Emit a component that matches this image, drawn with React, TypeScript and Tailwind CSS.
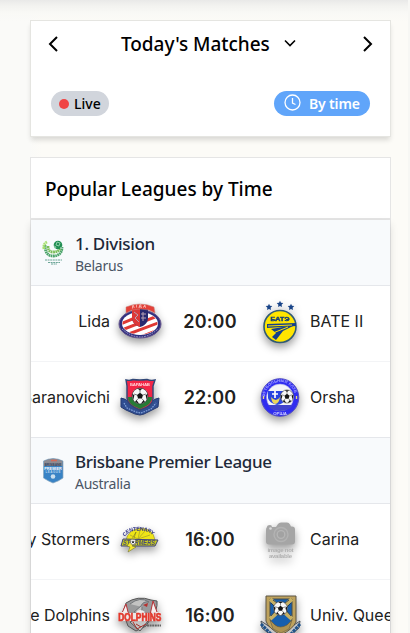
import React from "react";

const ui = "font-['Noto_Sans','Open_Sans',sans-serif]";
const inter = "font-['Inter',sans-serif]";

function Ball({ x, y, r }: { x: number; y: number; r: number }) {
  return (
    <g transform={`translate(${x} ${y}) scale(${r / 8})`}>
      <circle r="8" fill="#f8f8f8" stroke="#222" strokeWidth=".6" />
      <path d="M0-3.2 3-1 1.9 2.6H-1.9L-3-1Z" fill="#161616" />
      <path d="M-2.6-7.5 0-5.6 2.6-7.5ZM7.8-2.3 5.6-.8 6.8 4ZM-7.8-2.3-5.6-.8-6.8 4ZM-5 6-3.6 4-.8 7.8ZM5 6 3.6 4 .8 7.8Z" fill="#161616" />
      <path d="M0-3.2V-6M3-1 6-2M1.9 2.6 4 5M-1.9 2.6-4 5M-3-1-6-2" stroke="#444" strokeWidth=".7" />
    </g>
  );
}

function Lida() {
  return (
    <>
      <clipPath id="lidaOval"><ellipse cx="22" cy="23.5" rx="17.5" ry="11" /></clipPath>
      <ellipse cx="22" cy="24" rx="21" ry="14" fill="#30307f" stroke="#66558d" />
      <ellipse cx="22" cy="23.5" rx="18" ry="11.4" fill="#fff" />
      <g clipPath="url(#lidaOval)" stroke="#df3934" strokeWidth="3">
        <path d="M0 25 36 10M1 31 45 14M8 35 48 20M20 38 48 27" />
      </g>
      <path d="M14 8h16v10c0 5-4 8-8 9-5-2-8-5-8-9Z" fill="#28296f" />
      <path d="M14 8h8v19c-5-2-8-5-8-9Z" fill="#dd3838" />
      <path d="m16 12 4 3-3 3 4 4M25 12v9m-2-7h5m-5 4h5" stroke="#b7a2b4" strokeWidth="1" fill="none" />
      <path d="M8 7Q22 1 36 7l1 6-6-3Q22 8 14 10l-6 3Z" fill="#e34139" stroke="#c9857f" strokeWidth=".5" />
      <path id="lidaTop" d="M14 8.6Q22 6 31 8.6" fill="none" />
      <text fontSize="4" fontWeight="700" fill="#ffe5df"><textPath href="#lidaTop" textLength="14">ЛІДА</textPath></text>
      <path d="M4 29Q22 45 40 29" fill="none" stroke="#a9a0cb" strokeWidth="1" strokeDasharray="1.7 1" />
    </>
  );
}

function Baranovichi() {
  return (
    <>
      <path d="M3 22q5 0 9 6l10 4 10-4q4-6 9-6l-1 9-6 3-8 4-4 1-5-1-9-4-5-3Z" fill="#304e91" stroke="#263b72" />
      <path d="M8 4q4 1 7-.5 7 1 14 0Q33 5 37 4l-2 6v13q0 7-13 11Q9 29 9 22V10Z" fill="#f22647" stroke="#314777" strokeWidth="1.4" />
      <path d="M10 21h24q1 7-12 12-13-5-12-12Z" fill="#267c36" />
      <Ball x={22} y={20} r={8} />
      <text x="22" y="10" textAnchor="middle" fontSize="4.4" fontWeight="800" fill="#ffd1d6" textLength="20">БАРАНАВ</text>
      <path d="m6 27 3 5 9 4 5 1 10-4 5-6" fill="none" stroke="#86a4d8" strokeWidth="1.2" strokeDasharray="1.6 1" />
    </>
  );
}

function Bate() {
  return (
    <>
      <g fill="#194488">
        <path id="bateStar" d="m22 .8 1 2 2.3.3-1.7 1.6.4 2.3-2-1.1-2 1.1.4-2.3L18.7 3l2.3-.2Z" />
        <use href="#bateStar" x="-11" y="3" /><use href="#bateStar" x="11" y="3" />
      </g>
      <circle cx="22" cy="26.5" r="16" fill="#ffe500" stroke="#315b74" strokeWidth="1.6" />
      <text x="22" y="20.5" textAnchor="middle" fontSize="5.2" fontWeight="900" textLength="19" lengthAdjust="spacingAndGlyphs" fill="#164077" stroke="#164077" strokeWidth=".4">БАТЭ</text>
      <path d="M9 24 38 23v3L9 28Z" fill="#16408c" />
      <path d="m13 29 24-4-12 6-7 9-4-3 4-4Z" fill="#16408c" />
      <path d="m10 26 24-1M15 33l15-6" stroke="#ffe500" strokeWidth="1" />
    </>
  );
}

function Orsha() {
  return (
    <>
      <circle cx="22" cy="21.5" r="18.8" fill="#302df0" stroke="#5551c2" />
      <circle cx="22" cy="21.5" r="13.4" fill="#f5f5f8" stroke="#aaa8ed" strokeWidth=".6" />
      <path d="M10 15h18v7q-2 6-9 7-8-2-9-7Z" fill="#2944e0" />
      <path d="M17 15v7m-3-4h6" stroke="#fff" strokeWidth="1.7" />
      <path d="M13 21q5 6 9 0-1 7-5 7-3 0-4-7" fill="#ecd65b" />
      <Ball x={29} y={20.5} r={6.6} />
      <path d="M10 29h25q-4 6-13 6t-12-6Z" fill="#4142cd" />
      <path id="orshaTop" d="M7 21a15 15 0 0 1 30 0" fill="none" />
      <text fontSize="4" fontWeight="700" fill="#aaa8ff"><textPath href="#orshaTop" textLength="43">ФУТБОЛЬНЫЙ КЛУБ</textPath></text>
      <text x="22" y="39" fontSize="4.3" fontWeight="700" textAnchor="middle" fill="#d0cfff">ОРША</text>
      <path d="M5.5 20v3M38.5 20v3" stroke="#eadb7c" strokeWidth="1.3" />
    </>
  );
}

function Stormers() {
  return (
    <>
      <path d="M8 22q2-10 14-12 13 0 15 12Z" fill="#eee517" stroke="#8d873e" strokeWidth=".6" />
      <path d="m22 12-2 9 12-4m-12 4-8-4m8 4 7-8" stroke="#a49f29" strokeWidth=".7" fill="none" />
      <path id="stormArc" d="M7 19Q10 13 18 13 30 11 36 19" fill="none" />
      <text fontSize="5.3" fontWeight="900" fill="#292d87"><textPath href="#stormArc" textLength="31">CENTENARY</textPath></text>
      <path d="m5 21 35 1-3 6H3Z" fill="#c9cc1d" stroke="#3e427f" />
      <text x="5" y="27" fontSize="6.5" fontWeight="900" fontStyle="italic" textLength="32" lengthAdjust="spacingAndGlyphs" fill="#4a4c73">STORMERS</text>
      <path d="m18 14-3 9h4l-5 5 4 1-8 5 2-5-3-1 5-7Z" fill="#f4e82f" stroke="#65671f" strokeWidth=".5" />
      <Ball x={15} y={24} r={2.8} />
    </>
  );
}

function Dolphins() {
  return (
    <>
      <path d="M8 9Q20 1 33 6l6 1q1 9-6 17l-5 8-10 5-8-5L5 18Z" fill="#999a9c" stroke="#555" />
      <path d="m8 10 3 12-7-3ZM35 7l-3 14 7-3Z" fill="#f5eeee" stroke="#b83236" />
      <path d="M12 10q10-8 19-2-6-1-8 4l-7 6q9 2 8-5" fill="#c3c3c3" stroke="#727579" />
      <path d="M17 20q4-7 10-2l-4 3Z" fill="#eee" /><path d="m25 11 5-2-1 4Z" fill="#b6312f" />
      <path d="M12 28q9-6 18-1l-8 10Z" fill="#c4c4c4" stroke="#555" />
      <path d="M0 18h10v1h23v-1h10v9H0Z" fill="#ece7e7" />
      <text x=".3" y="26.7" fontSize="10.5" fontWeight="900" fill="#e7372a" stroke="#df392e" strokeWidth=".7" textLength="43" lengthAdjust="spacingAndGlyphs">DOLPHINS</text>
      <path d="m15 28 4 7 9-5M18 30l5 3" stroke="#a6332e" fill="none" />
      <path d="M29 31.5h14" stroke="#666" strokeWidth="1.8" strokeDasharray="2 .6" />
    </>
  );
}

function NoImage() {
  return (
    <>
      <path d="M9 9q0-2 3-2 2 0 2 2h4l2-3q1-1.5 3-1.5h6q2 0 3 2l1 2h1q3 0 3 3v12q0 3-3 3H11q-3 0-3-3V12q0-2 1-3Z" fill="#a5a5a5" />
      <circle cx="23" cy="16.5" r="7" fill="none" stroke="#b3b3b3" strokeWidth="1.4" />
      <circle cx="23" cy="16.5" r="3.8" fill="#a2a2a2" stroke="#b6b6b6" strokeWidth="1.3" />
      <circle cx="12.5" cy="10.5" r="1.3" fill="#d9d9d9" />
      <g fontSize="6" fontWeight="600" textAnchor="middle" fill="#b0b0b0">
        <text x="22.5" y="33.5" textLength="26">image not</text><text x="22.5" y="39.5" textLength="23">available</text>
      </g>
    </>
  );
}

function University() {
  return (
    <>
      <path d="m3 27 9 6 12 6 9-6 9-6-1 7-9 8-8 2-9-1-11-9Z" fill="#c7c8c9" stroke="#49515b" />
      <path d="m3 30 10 10 6 2M42 30 33 40l-6 2" stroke="#20538a" strokeWidth="3" strokeDasharray="3 .7" fill="none" />
      <path d="M8 2h30v26q-3 7-15 13Q10 34 8 27Z" fill="#bea25d" stroke="#5b5547" />
      <path d="M12 5h22v20q-2 6-11 9-9-3-11-9Z" fill="#165fae" stroke="#464a47" />
      <path d="m12 5 22 20M34 5 12 25" stroke="#c6b064" strokeWidth="4" />
      <path d="m15 6 8 6 8-6M13 9l6 6-6 7M33 9l-6 6 6 7" stroke="#1e3150" fill="none" strokeWidth=".8" />
      <Ball x={22.5} y={14.5} r={7} />
      <path d="m12 26 5 5q5 4 12 0l5-5-3 9-8 4-8-4Z" fill="#ad9353" stroke="#625a44" strokeWidth=".6" />
    </>
  );
}

const Crest = ({ children }: { children: React.ReactNode }) => (
  <svg viewBox="0 0 44 44" className="h-11 w-11 shrink-0 overflow-visible font-['Liberation_Sans',sans-serif] drop-shadow-[0_4px_4px_rgba(0,0,0,0.4)]">
    {children}
  </svg>
);

interface MatchProps { home: string; away: string; time: string; left: React.ReactNode; right: React.ReactNode; last?: boolean }

function Match({ home, away, time, left, right, last }: MatchProps) {
  return (
    <div className={`${inter} flex h-[76px] items-start overflow-hidden border-b pt-3.5 text-[#212121] ${last ? "border-gray-200" : "border-gray-100"}`}>
      <div className="flex h-[41px] w-[79px] shrink-0 items-center justify-end text-base whitespace-nowrap">{home}</div>
      <div className="ml-2 shrink-0"><Crest>{left}</Crest></div>
      <div className="flex h-[43px] w-24 shrink-0 items-center justify-center text-lg font-semibold tracking-[0.15px]">{time}</div>
      <div className="shrink-0"><Crest>{right}</Crest></div>
      <div className="ml-2 flex h-[41px] shrink-0 items-center text-base whitespace-nowrap">{away}</div>
    </div>
  );
}

function LeagueHeader({ name, country, logo, tracking }: { name: string; country: string; logo: React.ReactNode; tracking: string }) {
  return (
    <div className={`${ui} flex h-[66px] border-b border-gray-200 bg-[#f8fafc] pl-[11px]`}>
      <svg viewBox="0 0 22 28" className="mt-[19px] h-7 w-[22px] shrink-0">{logo}</svg>
      <div className="ml-[11px] pt-[13px]">
        <div className={`text-[17px] leading-[22px] font-medium whitespace-nowrap text-gray-800 ${tracking}`}>{name}</div>
        <div className="text-sm leading-[22px] tracking-[-0.25px] text-gray-600">{country}</div>
      </div>
    </div>
  );
}

function BelarusLogo() {
  return (
    <>
      <g fill="none" strokeWidth="2.8" strokeDasharray="1.7 .5">
        <path d="M3 6q0 11 8 11 9 0 9-9" stroke="#4ba46a" />
        <path d="M6 7q0 6 5 6 5 0 7-3" stroke="#79bd57" />
        <path d="M2 10q-1-5 3-7" stroke="#a8e070" />
      </g>
      <circle cx="16" cy="6" r="4.3" fill="#218e53" />
      <path d="m15 3 3 1-1 3-3-1ZM12 7l2 1-1 2m5-1 2-1" stroke="#a6d9b9" fill="none" strokeWidth=".8" />
      <path d="M3 21h17M6 23.5h12M9 25h6" stroke="#5c9c8c" strokeWidth=".9" strokeDasharray="2 .6" />
    </>
  );
}

function BrisbaneLogo() {
  return (
    <>
      <path d="M1.5 4Q11-1 21 4v17q-4 3-10 5-5-2-9.500-5Z" fill="#3983c5" stroke="#8aa7bf" strokeWidth=".7" />
      <path d="M2 4Q11-.5 20.500 4v5H2Z" fill="#8d8b92" /><path d="M9 3.500h6" stroke="#cf6b5c" strokeWidth="1.6" />
      <g fontFamily="Liberation Sans" textAnchor="middle" fontWeight="700">
        <text x="11" y="8.500" fontSize="4" textLength="17" lengthAdjust="spacingAndGlyphs" fill="#354663">BRISBANE</text>
        <text x="11" y="12.500" fontSize="4.400" textLength="17.500" lengthAdjust="spacingAndGlyphs" fill="#fff">PREMIER</text>
        <text x="11" y="16" fontSize="3" textLength="15" fill="#b5d5ef">LEAGUE</text>
      </g>
      <circle cx="11" cy="19.500" r="2.300" fill="#c9deed" />
    </>
  );
}

export default function App() {
  return (
    <div className={`${ui} flex h-[633px] w-[410px] overflow-hidden bg-[linear-gradient(to_bottom,#e9e9e8_0px,#f3f3f0_6px,#f9f9f6_13px,transparent_22px),linear-gradient(to_right,#fafaf8_0px,#fafaf8_29px,#fcfbf7_42px)]`}>
      <main className="ml-[30px] w-[361px] shrink-0 pt-5">
        <section className="h-[117px] border border-[#e5e5e1] bg-white shadow-[0_4px_5px_-1px_rgba(0,0,0,0.14)]">
          <div className="flex h-[45px] items-center px-4 text-black">
            <svg viewBox="0 0 14 16" className="h-4 w-3.5 shrink-0"><path d="M10 1 3 8l7 7" fill="none" stroke="currentColor" strokeWidth="2" /></svg>
            <h1 className="ml-[60px] w-[149px] text-[19px] leading-7 font-medium tracking-[-0.05px] whitespace-nowrap">Today's Matches</h1>
            <svg viewBox="0 0 14 10" className="-mt-0.5 ml-[13px] h-2.5 w-3.5 shrink-0"><path d="m2 2.5 5 5 5-5" fill="none" stroke="currentColor" strokeWidth="1.6" /></svg>
            <svg viewBox="0 0 14 16" className="ml-auto h-4 w-3.5 shrink-0"><path d="m4 1 7 7-7 7" fill="none" stroke="currentColor" strokeWidth="2" /></svg>
          </div>
          <div className="mt-[25px] flex h-[25px] items-center justify-between px-5 text-sm leading-5">
            <button className="flex h-[25px] w-[58px] items-center rounded-full bg-gray-300 pl-2 font-medium text-black"><i className="mr-[5px] h-2.5 w-2.5 rounded-full bg-[#f04444]" />Live</button>
            <button className="flex h-[25px] w-24 items-center rounded-full bg-[#60a5fa] pl-2.5 font-semibold whitespace-nowrap text-white">
              <svg viewBox="0 0 17 17" className="-mt-0.5 mr-2 h-[17px] w-[17px]"><path d="M8.5 1a7.5 7.5 0 1 1 0 15 7.5 7.5 0 0 1 0-15Zm0 3v5l3 1.500" fill="none" stroke="currentColor" strokeWidth="1.3" /></svg>
              <span className="tracking-[-0.15px]">By time</span>
            </button>
          </div>
        </section>
        <section className="mt-5 h-[640px] border border-[#e5e5e5] bg-white">
          <h2 className="h-[62px] border-b-2 border-[#e5e5e5] pt-[17px] pl-3.5 text-[19px] leading-7 font-medium text-black">Popular Leagues by Time</h2>
          <div className="shadow-[0_4px_8px_rgba(0,0,0,0.13)]">
            <div className="bg-white">
              <LeagueHeader name="1. Division" country="Belarus" logo={<BelarusLogo />} tracking="tracking-[-0.3px]" />
              <Match home="Lida" away="BATE II" time="20:00" left={<Lida />} right={<Bate />} />
              <Match home="Baranovichi" away="Orsha" time="22:00" left={<Baranovichi />} right={<Orsha />} last />
              <LeagueHeader name="Brisbane Premier League" country="Australia" logo={<BrisbaneLogo />} tracking="tracking-[-0.35px]" />
              <Match home="Centenary Stormers" away="Carina" time="16:00" left={<Stormers />} right={<NoImage />} />
              <Match home="Redcliffe Dolphins" away="Univ. Queensland" time="16:00" left={<Dolphins />} right={<University />} />
            </div>
          </div>
        </section>
      </main>
      <div className="ml-auto w-0.5 bg-[#f7f7f4]" />
    </div>
  );
}
